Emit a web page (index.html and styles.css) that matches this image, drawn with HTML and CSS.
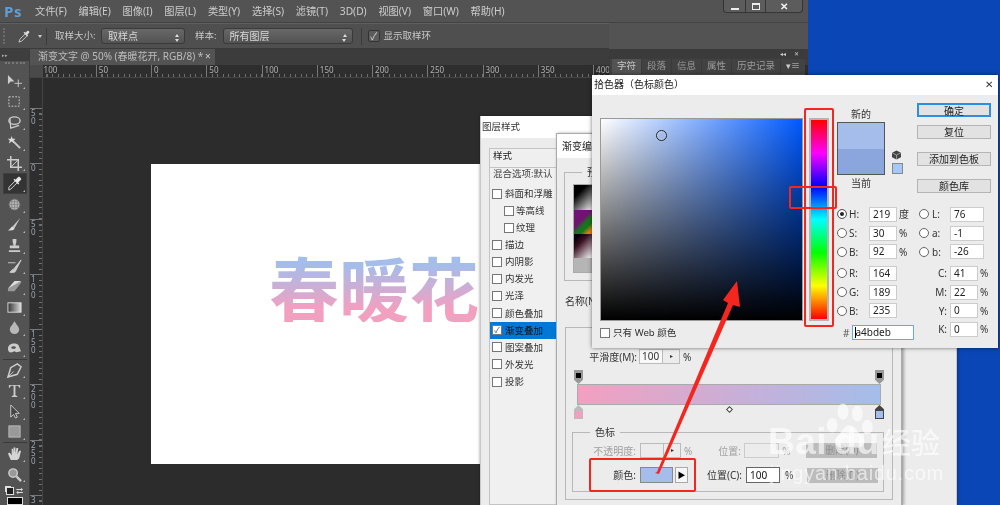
FILE: index.html
```html
<!DOCTYPE html>
<html lang="zh">
<head>
<meta charset="utf-8">
<title>Photoshop 拾色器</title>
<link rel="stylesheet" href="styles.css">
</head>
<body>
<div class="desktop">
  <div class="ps">
    <header class="menubar">
      <span class="logo">Ps</span>
      <nav class="menu">
        <span>文件(F)</span><span>编辑(E)</span><span>图像(I)</span><span>图层(L)</span><span>类型(Y)</span><span>选择(S)</span><span>滤镜(T)</span><span>3D(D)</span><span>视图(V)</span><span>窗口(W)</span><span>帮助(H)</span>
      </nav>
      <div class="winbtns">
        <span class="wb wb-min"><i></i></span><span class="wb wb-max"><i></i></span><span class="wb wb-close">✕</span>
      </div>
    </header>
    <div class="optbar">
      <span class="grip"></span>
      <svg class="opt-ico" viewBox="0 0 14 14"><path d="M1 13l1-3 6-6 2 2-6 6z" fill="none" stroke="#ccc"/><path d="M8 3l2-2c1-1 3 1 2 2l-2 2 1 1-1 1-4-4 1-1z" fill="#ddd"/></svg>
      <span class="tri-down"></span>
      <span class="opt-sep"></span>
      <span class="opt-label lab1">取样大小:</span>
      <span class="sel sel1">取样点<b class="updown"></b></span>
      <span class="opt-label lab2">样本:</span>
      <span class="sel sel2">所有图层<b class="updown"></b></span>
      <span class="opt-sep sep2"></span>
      <span class="opt-check">✓</span>
      <span class="opt-label">显示取样环</span>
    </div>
    <div class="main">
      <aside class="tools">
        <div class="tools-head"><span>▸▸</span></div>
        <div class="tools-grip"></div>
        <div class="tool"><svg viewBox="0 0 16 16"><path d="M1 2v10l3-3h4z" fill="#ccc"/><path d="M12 7v8M8 11h8" stroke="#ccc"/></svg></div>
        <div class="tool"><svg viewBox="0 0 16 16"><rect x="2" y="3" width="11" height="10" fill="none" stroke="#ccc" stroke-dasharray="2 1.4"/></svg></div>
        <div class="tool"><svg viewBox="0 0 16 16"><ellipse cx="8" cy="6" rx="6" ry="4" fill="none" stroke="#ccc" stroke-width="1.5"/><path d="M3 3l1 11 9-3" fill="none" stroke="#ccc" stroke-width="1.3"/></svg></div>
        <div class="tool"><svg viewBox="0 0 16 16"><path d="M7 7l7 7" stroke="#ccc" stroke-width="2"/><path d="M5 1l1 3 3 0-2 2 1 3-3-2-3 2 1-3-2-2 3 0z" fill="#ddd"/></svg></div>
        <div class="tool"><svg viewBox="0 0 16 16"><path d="M4 0v12h12M0 4h12v12" fill="none" stroke="#ccc" stroke-width="1.6"/><path d="M4 12l8-8" stroke="#ccc"/></svg></div>
        <div class="tool tool-on"><svg viewBox="0 0 16 16"><path d="M2 15l0-3 7-7 2 2-7 7z" fill="none" stroke="#ddd"/><path d="M9 4l3-3c1-1 4 2 3 3l-3 3 1 1-1 1-5-5 1-1z" fill="#e8e8e8"/></svg></div>
        <div class="tool"><svg viewBox="0 0 16 16"><circle cx="8" cy="8" r="5.5" fill="#b5b5b5"/><path d="M2 5h12M1 8h14M2 11h12M5 2v12M8 1v14M11 2v12" stroke="#777" stroke-width=".6"/></svg></div>
        <div class="tool"><svg viewBox="0 0 16 16"><path d="M14 1L6 10l2 2z" fill="#ccc"/><path d="M6 10c-2 0-2 3-5 4 3 1 7 0 7-2z" fill="#ddd"/></svg></div>
        <div class="tool"><svg viewBox="0 0 16 16"><path d="M6 1h4v3l-1 4h4v3H3V8h4L6 4zM2 13h12v2H2z" fill="#ccc"/></svg></div>
        <div class="tool"><svg viewBox="0 0 16 16"><path d="M1 4h8M15 1L7 11l2 2zM7 11c-2 0-2 2-4 3 3 1 6 0 6-1" fill="#ccc" stroke="#ccc"/></svg></div>
        <div class="tool"><svg viewBox="0 0 16 16"><path d="M1 10l7-8h7l-7 9H4z" fill="#ddd"/><path d="M1 10v3h7l7-9V2" fill="#999"/></svg></div>
        <div class="tool"><svg viewBox="0 0 16 16"><rect x="1" y="3" width="14" height="10" fill="url(#tg)" stroke="#ddd"/><defs><linearGradient id="tg"><stop offset="0" stop-color="#333"/><stop offset="1" stop-color="#ddd"/></linearGradient></defs></svg></div>
        <div class="tool"><svg viewBox="0 0 16 16"><path d="M8 1c1 3 5 6 5 9a5 5 0 01-10 0c0-3 4-6 5-9z" fill="#b8b8b8"/></svg></div>
        <div class="tool"><svg viewBox="0 0 16 16"><path d="M1 8c0-5 7-7 11-4l3 7-5 1-2-1c-2 1-7 3-7-3z" fill="#ccc"/><ellipse cx="7" cy="7" rx="2.5" ry="1.5" fill="#555"/></svg></div>
        <div class="tool-sep"></div>
        <div class="tool"><svg viewBox="0 0 16 16"><path d="M15 4L11 1 4 5 1 15l10-3 4-8z" fill="none" stroke="#ccc" stroke-width="1.6"/><path d="M1 15l6-6" stroke="#ccc"/></svg></div>
        <div class="tool"><svg viewBox="0 0 16 16"><path d="M2 2h12v3h-1l-1-2H9v10l2 1v1H5v-1l2-1V3H4L3 5H2z" fill="#ccc"/></svg></div>
        <div class="tool"><svg viewBox="0 0 16 16"><path d="M4 1v13l3-3 2 4 2-1-2-4h4z" fill="#444" stroke="#ccc"/></svg></div>
        <div class="tool"><svg viewBox="0 0 16 16"><rect x="2" y="2" width="12" height="12" fill="#999" stroke="#bbb"/></svg></div>
        <div class="tool-sep"></div>
        <div class="tool"><svg viewBox="0 0 16 16"><path d="M4 15L1 8l2-1 2 3V3l1.500 0L7 8V1.500h2V8l1-6h2l-1 7 2-4h2l-2 8-2 2z" fill="#d4d4d4"/></svg></div>
        <div class="tool"><svg viewBox="0 0 16 16"><circle cx="6.500" cy="6.500" r="4.500" fill="#999" stroke="#ccc" stroke-width="1.500"/><path d="M10 10l5 5" stroke="#ccc" stroke-width="2.500"/></svg></div>
        <div class="swap"><span class="mini"></span><span class="swap-arrow">⮂</span></div>
        <div class="fg"></div>
      </aside>
      <section class="work">
        <div class="tabbar">
          <div class="tab">渐变文字 @ 50% (春暖花开, RGB/8) *<span class="tab-x">×</span></div>
        </div>
        <div class="hruler">
          <span class="corner"></span>
          <div class="hticks">
            <span>100</span><span>50</span><span>0</span><span>50</span><span>100</span><span>150</span><span>200</span><span>250</span><span>300</span><span>350</span><span>400</span>
          </div>
        </div>
        <div class="stage">
          <div class="vruler">
            <span>5<br>0</span><span>0</span><span>5<br>0</span><span>1<br>0<br>0</span><span>1<br>5<br>0</span><span>2<br>0<br>0</span><span>2<br>5<br>0</span><span>3</span>
          </div>
          <div class="canvas-wrap">
            <div class="canvas"><span class="art">春暖花</span></div>
          </div>
        </div>
      </section>
      <aside class="panel">
        <div class="panel-top"><span>◂◂</span><span>✕</span></div>
        <div class="panel-tabs">
          <span class="ptab on">字符</span><span class="ptab">段落</span><span class="ptab">信息</span><span class="ptab">属性</span><span class="ptab">历史记录</span>
          <span class="pmenu">▾≡</span>
        </div>
        <div class="panel-row">
          <span class="pinput p1">思源黑体 CN</span><span class="parrow"></span>
          <span class="pinput p2">Bold</span><span class="parrow"></span>
        </div>
      </aside>
    </div>
  </div>

  <div class="win layerstyle">
    <div class="title">图层样式</div>
    <div class="ls-list">
      <div class="ls-head">样式</div>
      <div class="ls-blend">混合选项:默认</div>
      <div class="ls-row"><i class="cb"></i>斜面和浮雕</div>
      <div class="ls-row sub"><i class="cb"></i>等高线</div>
      <div class="ls-row sub"><i class="cb"></i>纹理</div>
      <div class="ls-row"><i class="cb"></i>描边</div>
      <div class="ls-row"><i class="cb"></i>内阴影</div>
      <div class="ls-row"><i class="cb"></i>内发光</div>
      <div class="ls-row"><i class="cb"></i>光泽</div>
      <div class="ls-row"><i class="cb"></i>颜色叠加</div>
      <div class="ls-row on"><i class="cb">✓</i>渐变叠加</div>
      <div class="ls-row"><i class="cb"></i>图案叠加</div>
      <div class="ls-row"><i class="cb"></i>外发光</div>
      <div class="ls-row"><i class="cb"></i>投影</div>
    </div>
  </div>

  <div class="win editor">
    <div class="title title-ed">渐变编辑器</div>
    <div class="group presets">
      <span class="legend">预设</span>
      <div class="swatches">
        <i class="sw s1"></i><i class="sw s2"></i><i class="sw s3"></i><i class="sw s4"></i>
      </div>
    </div>
    <div class="name-row">名称(N):</div>
    <div class="group grad">
      <div class="smooth">
        <span class="lab-smooth">平滑度(M):</span>
        <span class="num-split"><span>100</span><b>▸</b></span>
        <span class="pct">%</span>
      </div>
      <div class="stops top"><i class="stop-b"></i><i class="stop-b"></i></div>
      <div class="bar"></div>
      <div class="stops bottom">
        <i class="stop-c pink"></i><i class="diamond"></i><i class="stop-c blue"></i>
      </div>
      <div class="group colorstops">
        <span class="legend">色标</span>
        <div class="cs-row dim">
          <span class="cs-lab">不透明度:</span>
          <span class="num-split blank"><span></span><b>▸</b></span>
          <span class="pct">%</span>
          <span class="cs-pos">位置:</span>
          <span class="blank-input"></span>
          <span class="pct pct2">%</span>
          <span class="del">删除(D)</span>
        </div>
        <div class="cs-row">
          <span class="cs-lab">颜色:</span>
          <span class="color-swatch"></span>
          <span class="color-arrow">▶</span>
          <span class="cs-pos on">位置(C):</span>
          <span class="val-input">100</span>
          <span class="pct pct3">%</span>
          <span class="del">删除(D)</span>
        </div>
      </div>
    </div>
  </div>

  <div class="win picker">
    <div class="title title-pk">拾色器（色标颜色）<span class="close">✕</span></div>
    <div class="pk-body">
      <div class="pk-left">
        <div class="field"><i class="ring"></i></div>
        <label class="web"><i class="cb"></i>只有 Web 颜色</label>
      </div>
      <div class="hue"><div class="hue-strip"></div><i class="mark ml"></i><i class="mark mr"></i></div>
      <div class="pk-right">
        <div class="pk-top">
          <div class="preview">
            <span class="pv-lab">新的</span>
            <div class="pv"><i class="pv-new"></i><i class="pv-old"></i></div>
            <span class="pv-lab">当前</span>
            <div class="pv-side">
              <svg viewBox="0 0 10 10"><path d="M5 0l5 2.500v5L5 10 0 7.500v-5z" fill="#444"/><path d="M0 2.500L5 5l5-2.500M5 5v5" stroke="#ddd" stroke-width=".6" fill="none"/></svg>
              <i class="safe"></i>
            </div>
          </div>
          <div class="pk-btns">
            <button class="btn primary">确定</button>
            <button class="btn b2">复位</button>
            <button class="btn b3">添加到色板</button>
            <button class="btn b3">颜色库</button>
          </div>
        </div>
        <div class="values">
          <div class="val-col">
            <div class="vr"><i class="radio sel-r"></i><b>H:</b><span class="inp">219</span><em>度</em></div>
            <div class="vr"><i class="radio"></i><b>S:</b><span class="inp">30</span><em>%</em></div>
            <div class="vr gapb"><i class="radio"></i><b>B:</b><span class="inp">92</span><em>%</em></div>
            <div class="vr"><i class="radio"></i><b>R:</b><span class="inp">164</span></div>
            <div class="vr"><i class="radio"></i><b>G:</b><span class="inp">189</span></div>
            <div class="vr"><i class="radio"></i><b>B:</b><span class="inp">235</span></div>
            <div class="hex"><span>#</span><span class="hex-inp"><u></u>a4bdeb</span></div>
          </div>
          <div class="val-col right">
            <div class="vr"><i class="radio"></i><b>L:</b><span class="inp w">76</span></div>
            <div class="vr"><i class="radio"></i><b>a:</b><span class="inp w">-1</span></div>
            <div class="vr gapb"><i class="radio"></i><b>b:</b><span class="inp w">-26</span></div>
            <div class="vr"><b class="k">C:</b><span class="inp">41</span><em>%</em></div>
            <div class="vr"><b class="k">M:</b><span class="inp">22</span><em>%</em></div>
            <div class="vr"><b class="k">Y:</b><span class="inp">0</span><em>%</em></div>
            <div class="vr"><b class="k">K:</b><span class="inp">0</span><em>%</em></div>
          </div>
        </div>
      </div>
    </div>
  </div>

  <i class="red r1"></i>
  <i class="red r2"></i>
  <i class="red r3"></i>
  <svg class="arrow" viewBox="0 0 1000 505"><path d="M655 473L657 472 728 303 723 300 737 281 740 307 733 305 659 474z" fill="#f5261e"/></svg>

  <div class="watermark">
    <svg class="paw" viewBox="0 0 60 60"><ellipse cx="20" cy="13" rx="6" ry="9"/><ellipse cx="36" cy="15" rx="6" ry="9"/><ellipse cx="8" cy="28" rx="6" ry="8"/><ellipse cx="47" cy="30" rx="6" ry="8"/><path d="M27 28c7 0 9 8 14 12 6 6 2 14-6 13-5-1-10-1-15 0-8 1-12-8-6-13 5-4 6-12 13-12z"/></svg>
    <div class="wm-main"><span class="wm-bai">Bai</span><span class="wm-du">du</span><span class="wm-cn">经验</span></div>
    <div class="wm-url">jingyan.baidu.com</div>
  </div>
</div>
</body>
</html>
```

FILE: styles.css
```css
* { box-sizing: border-box; }
html, body { margin: 0; padding: 0; }
body {
  width: 1000px; height: 505px; overflow: hidden;
  font: 10px/1.2 "Noto Sans", "Noto Sans CJK SC", sans-serif;
}
i, em, u { font-style: normal; text-decoration: none; }
.desktop {
  position: relative; width: 1000px; height: 505px; overflow: hidden;
  background: #0a46b6; filter: blur(.4px);
}
.ps {
  position: absolute; left: 0; top: 0; width: 808px; height: 505px;
  display: flex; flex-direction: column; background: #535353; color: #c4c4c4;
}

/* menu */
.menubar { height: 23px; flex: none; display: flex; align-items: center; padding-left: 4px; background: #535353; border-bottom: 1px solid #424242; position: relative; }
.logo { font: bold 15px/1 "Open Sans", sans-serif; color: #5e9fd6; width: 31px; letter-spacing: .5px; }
.menu { display: flex; gap: 11.8px; font-size: 10.2px; color: #cdcdcd; white-space: nowrap; }
.winbtns { position: absolute; left: 723px; top: 0; display: flex; height: 13px; border: 1px solid #353535; border-top: 0; border-radius: 0 0 4px 4px; background: #5c5c5c; }
.wb { display: flex; align-items: center; justify-content: center; height: 12px; border-right: 1px solid #353535; color: #f2f2f2; font-size: 10px; }
.wb-min { width: 22px; } .wb-max { width: 20px; } .wb-close { width: 36px; border: 0; font-weight: bold; }
.wb-min i { width: 8px; height: 2px; background: #eee; margin-top: 5px; }
.wb-max i { width: 8px; height: 7px; border: 1px solid #eee; border-top-width: 2px; }

/* options */
.optbar { height: 26px; flex: none; display: flex; align-items: center; padding-left: 3px; background: #4f4f4f; width: 609px; border-bottom: 1px solid #3a3a3a; border-top: 1px solid #5f5f5f; font-size: 10px; white-space: nowrap; }
.grip { width: 2px; height: 16px; border-left: 2px dotted #6c6c6c; }
.opt-ico { width: 13px; height: 13px; margin-left: 13px; }
.tri-down { width: 0; height: 0; border: 2.5px solid transparent; border-top: 3px solid #ccc; margin: 3px 0 0 7px; }
.opt-sep { width: 1px; height: 17px; background: #3b3b3b; margin-left: 4px; }
.opt-label { color: #c8c8c8; font-size: 9.5px; }
.lab1 { margin-left: 8px; width: 46px; }
.sel { display: flex; align-items: center; height: 16px; padding-left: 6px; border: 1px solid #3a3a3a; border-radius: 3px; background: linear-gradient(#686868, #535353); color: #d8d8d8; position: relative; }
.sel1 { width: 84px; } .sel2 { width: 130px; }
.updown { position: absolute; right: 5px; top: 3px; width: 0; height: 0; border: 2.500px solid transparent; border-bottom: 3px solid #ddd; }
.updown::after { content: ""; position: absolute; left: -2.500px; top: 5px; width: 0; height: 0; border: 2.500px solid transparent; border-top: 3px solid #ddd; }
.lab2 { margin: 0 6px 0 10px; }
.sep2 { margin-left: 8px; margin-right: 6px; }
.opt-check { width: 12px; height: 12px; margin-right: 4px; border: 1px solid #333; border-radius: 2px; background: #5c5c5c; color: #ddd; font-size: 10px; line-height: 10px; text-align: center; }

/* main */
.main { flex: 1; display: flex; min-height: 0; position: relative; }
.tools { width: 30px; flex: none; background: #535353; display: flex; flex-direction: column; align-items: center; border-right: 1px solid #3d3d3d; }
.tools-head { height: 13px; width: 100%; background: #3e3e3e; color: #aaa; font-size: 5px; line-height: 12px; padding-left: 2px; }
.tools-grip { width: 20px; height: 3px; margin: 1px 0 6px; border-top: 2px dotted #777; }
.tool { width: 24px; height: 20.6px; flex: none; display: flex; align-items: center; justify-content: center; position: relative; border-radius: 2px; }
.tool svg { width: 15px; height: 15px; }
.tool::after { content: ""; position: absolute; right: 2px; bottom: 2px; border: 1.500px solid transparent; border-right-color: #bbb; border-bottom-color: #bbb; }
.tool-on { background: #343434; box-shadow: inset 0 0 0 1px #3e3e3e; }
.tool-sep { width: 24px; height: 1px; flex: none; background: #3a3a3a; margin: 0; }
.swap { display: flex; gap: 2px; margin-top: 2px; height: 12px; color: #ddd; font-size: 9px; line-height: 10px; align-items: center; }
.mini { width: 8px; height: 8px; background: #222; border: 1px solid #ddd; box-shadow: -2px -2px 0 -1px #ddd; }
.fg { width: 16px; height: 13px; background: #000; border: 1px solid #ddd; margin-top: 1px; }

.work { flex: 1; width: 579px; min-width: 0; display: flex; flex-direction: column; }
.tabbar { height: 16px; flex: none; background: #3c3c3c; }
.tab { width: 185px; height: 16px; padding-left: 8px; background: #535353; color: #bcbcbc; font-size: 10px; line-height: 15px; white-space: nowrap; position: relative; }
.tab-x { position: absolute; left: 175px; top: 0; color: #ccc; }
.hruler { height: 13px; flex: none; background: #2e2e2e; border-bottom: 1px solid #444; display: flex; position: relative; overflow: hidden; }
.corner { position: absolute; left: 0; top: 0; width: 13px; height: 13px; background: #4a4a4a; z-index: 1; }
.hticks { display: flex; margin-left: 10.600px; }
.hticks span {
  width: 55.250px; flex: none; padding-left: 2px; font-size: 8px; line-height: 9px; color: #b0b0b0;
  border-left: 1px solid #777;
  background: repeating-linear-gradient(90deg, transparent 0 4.500px, #6e6e6e 4.500px 5.525px) 0 100% / 100% 3px no-repeat;
}
.stage { flex: 1; display: flex; min-height: 0; }
.vruler { width: 13px; flex: none; background: #2e2e2e; border-right: 1px solid #444; padding-top: 30px; display: flex; flex-direction: column;
}
.vruler span {
  height: 55.250px; flex: none; padding-left: 1px; font-size: 8px; line-height: 8px; color: #9aa6b4;
  border-top: 1px solid #777;
  background: repeating-linear-gradient(180deg, transparent 0 4.500px, #6e6e6e 4.500px 5.525px) 100% 0 / 3px 100% no-repeat;
}
.canvas-wrap { flex: 1; background: #2c2c2c; padding: 86px 0 0 108px; }
.canvas { width: 329px; height: 300px; background: #fff; display: flex; align-items: center; padding: 0 0 54px 118px; overflow: hidden; }
.art { font: bold 70px/1 "Noto Sans CJK SC", sans-serif; white-space: nowrap; background: linear-gradient(#a4bdeb 18%, #f2a0c0 82%); -webkit-background-clip: text; background-clip: text; color: transparent; }

/* panel */
.panel { position: absolute; left: 609px; top: 0; width: 196px; height: 60px; background: #535353; border-left: 1px solid #3a3a3a; }
.panel-top { height: 10px; background: #3b3b3b; display: flex; justify-content: flex-end; gap: 8px; padding-right: 6px; color: #ccc; font-size: 6px; line-height: 10px; }
.panel-tabs { display: flex; height: 15px; background: #424242; color: #9a9a9a; font-size: 9.500px; line-height: 14px; position: relative; }
.ptab { padding: 0 5px; border-right: 1px solid #3a3a3a; }
.ptab:nth-child(1) { margin-left: 2px; }
.ptab.on { background: #535353; color: #c8c8c8; }
.pmenu { position: absolute; right: 5px; top: 0; color: #ccc; font-size: 9px; }
.panel-row { display: flex; align-items: center; padding: 6px 0 0 7px; }
.pinput { height: 13px; background: #e8e8e8; color: #999; font-size: 9.500px; line-height: 12px; padding-left: 3px; white-space: nowrap; }
.p1 { width: 68px; } .p2 { width: 40px; margin-left: 10px; }
.parrow { width: 16px; height: 15px; background: #5a5a5a; border-radius: 2px; position: relative; }
.parrow::after { content: ""; position: absolute; left: 6px; top: 7px; border: 2px solid transparent; border-top-color: #aaa; }

/* windows */
.win { position: absolute; background: #ececec; color: #222; }
.title { background: #fff; white-space: nowrap; }
.layerstyle { left: 480px; top: 116px; width: 477px; height: 389px; border: 1px solid #c8c8c8; border-width: 0 1px; box-shadow: 0 0 3px rgba(0,0,0,.4); }
.layerstyle .title { height: 22px; padding-left: 1px; font-size: 9.5px; line-height: 21px; color: #333; }
.ls-list { margin: 10px 0 0 8px; width: 120px; height: 357px; border: 1px solid #c4c4c4; background: #f0f0f0; font-size: 9.500px; }
.ls-head { height: 19px; padding-left: 3px; line-height: 13px; background: #efefef; border-bottom: 1px solid #c4c4c4; }
.ls-blend { height: 17px; padding-left: 3px; color: #444; line-height: 12px; }
.ls-row { height: 17.100px; display: flex; align-items: center; gap: 3px; padding-left: 2px; white-space: nowrap; color: #333; }
.ls-row.sub { padding-left: 14px; gap: 2px; }
.ls-row.on { background: #0078d7; color: #111; }
.cb { width: 10px; height: 10px; flex: none; display: block; border: 1px solid #777; background: #fff; font-size: 8px; line-height: 8px; text-align: center; color: #444; }

.editor { left: 556px; top: 133px; width: 347px; height: 372px; border-left: 1px solid #aaa; border-right: 2px solid #aaa; border-top: 1px solid #aaa; box-shadow: 1px 0 3px rgba(0,0,0,.3); }
.title-ed { height: 24px; padding-left: 5px; font-size: 10px; line-height: 24px; margin-bottom: 14px; }
.group { border: 1px solid #b8b8b8; position: relative; }
.legend { position: absolute; left: 17px; top: -7px; padding: 0 5px; background: #ececec; font-size: 10px; line-height: 13px; color: #333; white-space: nowrap; }
.presets { margin-left: 7px; width: 330px; height: 109px; padding: 11px 0 0 8px; }
.swatches { width: 90px; height: 89px; display: flex; flex-direction: column; border: 1px solid #aaa; }
.sw { display: block; }
.s1 { height: 25px; background: linear-gradient(135deg, #000 25%, #eee 85%) 0 0 / 25px 25px; }
.s2 { height: 25px; background: linear-gradient(135deg, #6f1470 35%, #16771a 50% 60%, #f07d10 75%) 0 0 / 25px 25px; }
.s3 { height: 24px; background: linear-gradient(135deg, #000 10%, #3a1020 30%, #eee 80%) 0 0 / 25px 25px; }
.s4 { height: 14px; background: #b5b5b5; }
.name-row { margin: 12px 0 0 8px; height: 20px; font-size: 10px; line-height: 17px; color: #333; }
.grad { margin: 14px 0 0 8px; width: 328px; height: 173px; padding: 21px 0 0 11px; }
.smooth { display: flex; align-items: center; height: 15px; }
.lab-smooth { width: 60px; text-align: right; font-size: 10px; color: #333; white-space: nowrap; }
.num-split { display: flex; width: 41px; height: 15px; margin-left: 2px; border: 1px solid #bbb; background: #ececec; font-size: 10px; line-height: 13px; }
.num-split span { width: 23px; background: #f8f8f8; padding-left: 2px; border-right: 1px solid #bbb; color: #333; }
.num-split b { flex: 1; text-align: center; font-size: 6px; font-weight: normal; color: #333; }
.pct { margin-left: 3px; font-size: 10px; color: #333; }
.stops { display: flex; justify-content: space-between; height: 14px; width: 304px; position: relative; }
.stops.top { margin-top: 6px; }
.stop-b { width: 9px; height: 14px; margin-left: -3px; background: linear-gradient(#000 0 0) center 3px / 5px 5px no-repeat, #999; clip-path: polygon(0 0, 100% 0, 100% 70%, 50% 100%, 0 70%); }
.stop-b:last-child { margin-left: 0; margin-right: -3px; }
.bar { width: 304px; height: 21px; border: 1px solid #aaa; background: linear-gradient(90deg, #f2a0c0, #a4bdeb); }
.stop-c { width: 9px; height: 14px; background: #777; clip-path: polygon(50% 0, 100% 30%, 100% 100%, 0 100%, 0 30%); position: relative; }
.stop-c::after { content: ""; position: absolute; left: 1px; right: 1px; bottom: 1px; height: 7px; }
.stop-c.pink { margin-left: -3px; background: #bbb; }
.stop-c.pink::after { background: #f2a0c0; }
.stop-c.blue { margin-right: -3px; background: #444; }
.stop-c.blue::after { background: #a4bdeb; }
.diamond { width: 5px; height: 5px; margin-top: 2px; border: 1px solid #444; background: #fff; transform: rotate(45deg); }
.colorstops { margin: 13px 0 0 -5px; width: 312px; height: 60px; padding-top: 10px; }
.cs-row { display: flex; align-items: center; height: 16px; margin-bottom: 9px; font-size: 10px; color: #333; white-space: nowrap; }
.cs-row.dim { color: #a0a0a0; height: 15px; }
.cs-row.dim .pct { color: #a0a0a0; }
.cs-lab { width: 63px; text-align: right; }
.num-split.blank { margin-left: 4px; background: #ececec; }
.num-split.blank span { background: #ececec; }
.cs-pos { margin-left: 26px; width: 26px; }
.cs-pos.on { margin-left: 19px; width: 39px; }
.blank-input { width: 35px; height: 15px; border: 1px solid #ccc; }
.pct2 { width: 24px; flex: none; }
.del { width: 71px; height: 15px; flex: none; background: #bcbcbc; color: #8e8e8e; text-align: center; line-height: 14px; }
.color-swatch { width: 33px; height: 16px; margin-left: 4px; background: #a4bdeb; border: 1px solid #888; }
.color-arrow { width: 13px; height: 16px; margin-left: 2px; margin-right: 0; border: 1px solid #aaa; background: #f6f6f6; font-size: 8px; line-height: 14px; text-align: center; color: #000; }
.val-input { width: 34px; height: 16px; border: 1px solid #666; background: #fff; padding-left: 3px; line-height: 14px; color: #111; }
.pct3 { width: 22px; margin-left: 5px; flex: none; }

/* picker */
.picker { left: 592px; top: 75px; width: 406px; height: 273px; box-shadow: 0 0 4px rgba(0,0,0,.55); }
.title-pk { height: 20px; padding-left: 2px; font-size: 10px; line-height: 19px; position: relative; color: #222; }
.close { position: absolute; right: 5px; top: 0; font-size: 10px; color: #333; }
.pk-body { display: flex; padding-left: 8px; }
.pk-left { margin-top: 23px; width: 202px; }
.field { width: 203px; height: 203px; border: 1px solid #999; position: relative; background: linear-gradient(transparent, #000), linear-gradient(90deg, #fff, #0059ff); }
.ring { position: absolute; left: 55px; top: 11px; width: 11px; height: 11px; border-radius: 50%; border: 1px solid #222; box-shadow: inset 0 0 0 1px rgba(255,255,255,.35); }
.web { display: flex; align-items: center; gap: 3px; margin-top: 6px; font-size: 9.6px; color: #333; white-space: nowrap; }
.hue { margin: 23px 0 0 7px; width: 20px; height: 203px; flex: none; border: 2px solid #b4b4b4; position: relative; }
.hue-strip { height: 100%; background: linear-gradient(#f00, #f0f 16.67%, #00f 33.33%, #0ff 50%, #0f0 66.67%, #ff0 83.33%, #f00); }
.mark { position: absolute; top: 75px; width: 4px; height: 8px; }
.ml { left: -6px; background: #e8e8e8; clip-path: polygon(0 0, 100% 50%, 0 100%); }
.mr { right: -7px; background: #e8e8e8; clip-path: polygon(100% 0, 0 50%, 100% 100%); }
.pk-right { margin-left: 8px; width: 161px; }
.pk-top { display: flex; height: 110px; }
.preview { width: 80px; padding-top: 13px; position: relative; font-size: 10px; color: #333; }
.pv-lab { display: block; width: 48px; text-align: center; height: 14px; line-height: 12px; }
.pv { width: 48px; height: 53px; border: 1px solid #555; display: flex; flex-direction: column; margin-bottom: 2px; }
.pv-new, .pv-old { flex: 1; display: block; }
.pv-new { background: #a4bdeb; }
.pv-old { background: #8ba6dc; }
.pv-side { position: absolute; left: 55px; top: 55px; width: 10px; }
.pv-side svg { width: 9px; height: 10px; display: block; }
.safe { display: block; width: 11px; height: 11px; margin-top: 3px; border: 1px solid #888; background: #a4c8f8; }
.pk-btns { display: flex; flex-direction: column; padding-top: 8px; }
.btn { width: 74px; height: 14px; padding: 0; border: 1px solid #b4b4b4; background: #e2e2e2; color: #222; font: 10px/12px "Noto Sans", "Noto Sans CJK SC", sans-serif; white-space: nowrap; }
.btn.primary { border: 2px solid #2d8fe0; }
.b2 { margin-top: 8px; }
.b3 { margin-top: 13px; }
.values { display: flex; height: 140px; font-size: 10px; color: #333; }
.val-col { width: 82px; flex: none; }
.vr { display: flex; align-items: center; height: 18.7px; }
.gapb { margin-bottom: 3px; }
.vr b { width: 20px; font-weight: normal; color: #333; }
.radio { width: 10px; height: 10px; border-radius: 50%; border: 1px solid #666; background: #fff; flex: none; margin-right: 2px; display: block; }
.sel-r { box-shadow: inset 0 0 0 2px #fff; background: #222; }
.inp { width: 28px; height: 15px; padding-left: 3px; background: #fff; border: 1px solid #ccc; line-height: 13px; color: #222; flex: none; }
.inp.w { width: 34px; }
.vr em { margin-left: 2px; color: #333; }
.right .vr b { padding-left: 1px; width: 19px; }
.right .vr b.k { width: 28px; text-align: right; padding-right: 3px; margin-left: 3px; }
.hex { display: flex; align-items: center; gap: 3px; height: 15px; margin-top: 5px; padding-left: 6px; color: #555; }
.hex-inp { width: 62px; height: 15px; border: 1px solid #6aa8e0; background: #fff; line-height: 13px; padding-left: 2px; color: #222; position: relative; }
.hex-inp u { position: absolute; left: 2px; top: 1px; width: 1px; height: 11px; background: #000; }

/* annotations */
.red { position: absolute; display: block; border: 2px solid #f5261e; border-radius: 2px; }
.r1 { left: 804px; top: 108px; width: 30px; height: 219px; }
.r2 { left: 789px; top: 186px; width: 48px; height: 23px; }
.r3 { left: 589px; top: 458px; width: 107px; height: 34px; }
.arrow { position: absolute; left: 0; top: 0; width: 1000px; height: 505px; }

/* watermark */
.watermark { position: absolute; left: 768px; top: 396px; width: 180px; height: 90px; color: rgba(255,255,255,.62); white-space: nowrap; }
.paw { position: absolute; left: 56px; top: 4px; width: 56px; height: 54px; fill: rgba(255,255,255,.62); }
.wm-main { position: absolute; left: 0; top: 24px; display: flex; align-items: baseline; font: bold 37px/44px "Liberation Sans", sans-serif; }
.wm-bai { width: 66px; letter-spacing: .5px; }
.wm-du { width: 48px; }
.wm-cn { font: 500 29px/1 "Noto Sans CJK SC", sans-serif; }
.wm-url { position: absolute; left: 2px; top: 65px; font: 20px/24px "Liberation Sans", sans-serif; letter-spacing: .75px; }
```
